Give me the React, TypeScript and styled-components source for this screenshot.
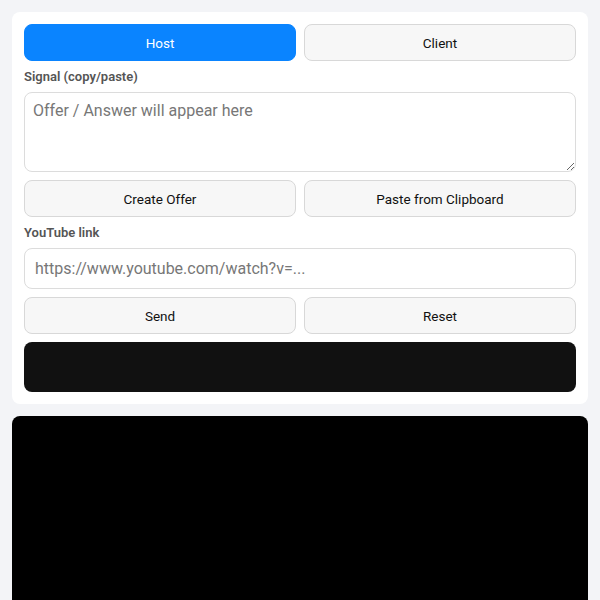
import React, { useState } from 'react';
import styled, { createGlobalStyle } from 'styled-components';

const GlobalStyle = createGlobalStyle`
  html, body {
    margin: 0;
    padding: 0;
    background: #f3f4f7;
    font-family: Roboto, "Liberation Sans", Arial, sans-serif;
  }
  * {
    box-sizing: border-box;
  }
`;

const Page = styled.div`
  padding: 12px;
  display: flex;
  flex-direction: column;
  gap: 12px;
`;

const Card = styled.div`
  background: #fff;
  border-radius: 8px;
  padding: 12px;
  display: flex;
  flex-direction: column;
  gap: 8px;
`;

const Row = styled.div`
  display: grid;
  grid-template-columns: 1fr 1fr;
  gap: 8px;
`;

const Button = styled.button<{ $active?: boolean }>`
  height: 37px;
  border-radius: 8px;
  font-family: inherit;
  font-size: 13.5px;
  cursor: pointer;
  border: 1px solid ${p => (p.$active ? '#0a84ff' : '#d8d8d8')};
  background: ${p => (p.$active ? '#0a84ff' : '#f7f7f7')};
  color: ${p => (p.$active ? '#fff' : '#111')};
`;

const Label = styled.div`
  font-size: 13px;
  font-weight: 600;
  color: #555;
  line-height: 15px;
`;

const SignalBox = styled.textarea`
  height: 80px;
  width: 100%;
  border: 1px solid #dcdcdc;
  border-radius: 8px;
  padding: 8px;
  font-family: inherit;
  font-size: 16px;
  color: #111;
  &::placeholder {
    color: #777;
  }
`;

const LinkInput = styled.input`
  height: 41px;
  width: 100%;
  border: 1px solid #dcdcdc;
  border-radius: 8px;
  padding: 0 10px;
  font-family: inherit;
  font-size: 16px;
  color: #111;
  &::placeholder {
    color: #777;
  }
`;

const Status = styled.div`
  height: 50px;
  border-radius: 8px;
  background: #111;
`;

const Video = styled.div`
  aspect-ratio: 16 / 9;
  border-radius: 8px;
  background: #000;
`;

const App: React.FC = () => {
  const [role, setRole] = useState<'host' | 'client'>('host');
  const [signal, setSignal] = useState('');
  const [link, setLink] = useState('');

  return (
    <>
      <GlobalStyle />
      <Page>
        <Card>
          <Row>
            <Button $active={role === 'host'} onClick={() => setRole('host')}>Host</Button>
            <Button $active={role === 'client'} onClick={() => setRole('client')}>Client</Button>
          </Row>
          <Label>Signal (copy/paste)</Label>
          <SignalBox
            placeholder="Offer / Answer will appear here"
            value={signal}
            onChange={e => setSignal(e.target.value)}
          />
          <Row>
            <Button>Create Offer</Button>
            <Button>Paste from Clipboard</Button>
          </Row>
          <Label>YouTube link</Label>
          <LinkInput
            placeholder="https://www.youtube.com/watch?v=..."
            value={link}
            onChange={e => setLink(e.target.value)}
          />
          <Row>
            <Button>Send</Button>
            <Button onClick={() => { setSignal(''); setLink(''); }}>Reset</Button>
          </Row>
          <Status />
        </Card>
        <Video />
      </Page>
    </>
  );
};

export default App;
